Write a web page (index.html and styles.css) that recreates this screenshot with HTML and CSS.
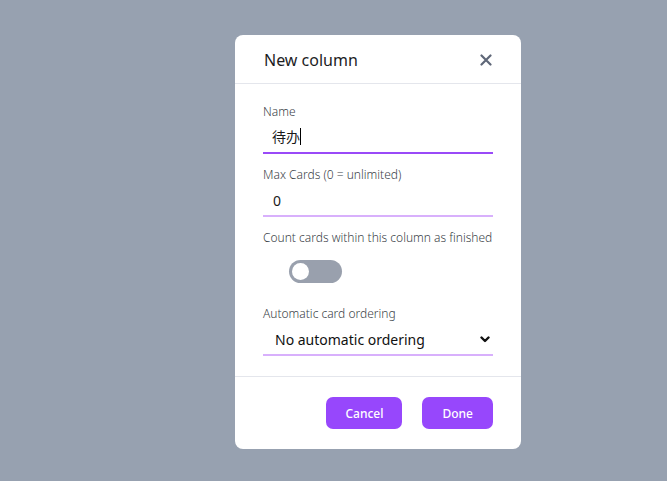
FILE: index.html
```html
<!DOCTYPE html>
<html>
<head>
<meta charset="utf-8">
<link rel="stylesheet" href="styles.css">
</head>
<body>
<div class="overlay">
  <div class="dialog">
    <div class="header">
      <span class="title">New column</span>
      <svg class="close" width="12" height="12" viewBox="0 0 12 12"><path d="M1.5 1.5 L10.5 10.5 M10.5 1.5 L1.5 10.5" stroke="#5f6778" stroke-width="2.2" stroke-linecap="round"/></svg>
    </div>
    <div class="body">
      <div class="field">
        <label class="label">Name</label>
        <div class="input active">待办<span class="caret"></span></div>
      </div>
      <div class="field">
        <label class="label">Max Cards (0 = unlimited)</label>
        <div class="input">0</div>
      </div>
      <div class="field">
        <label class="label">Count cards within this column as finished</label>
        <div class="toggle-row"><div class="toggle"><div class="knob"></div></div></div>
      </div>
      <div class="field last">
        <label class="label">Automatic card ordering</label>
        <div class="input select">
          <span>No automatic ordering</span>
          <svg width="10" height="7" viewBox="0 0 10 7"><path d="M1.5 1.5 L5 5 L8.5 1.5" fill="none" stroke="#111" stroke-width="2.4" stroke-linecap="round" stroke-linejoin="round"/></svg>
        </div>
      </div>
    </div>
    <div class="footer">
      <button class="btn">Cancel</button>
      <button class="btn done">Done</button>
    </div>
  </div>
</div>
</body>
</html>
```
FILE: styles.css
```css
html, body {
  margin: 0;
  padding: 0;
  height: 100%;
}
body {
  background: #97a1b0;
  font-family: "Noto Sans", "Noto Sans CJK SC", sans-serif;
}
.overlay {
  padding-top: 35px;
  padding-left: 235px;
}
.dialog {
  width: 286px;
  height: 414px;
  background: #fff;
  border-radius: 8px;
  display: flex;
  flex-direction: column;
  box-sizing: border-box;
}
.header {
  height: 48px;
  border-bottom: 1px solid #e4e6ec;
  display: flex;
  align-items: center;
  justify-content: space-between;
  padding: 0 28px 0 29px;
}
.title {
  font-size: 16px;
  color: #1d1d1f;
  position: relative;
  top: 1px;
}
.close {
  margin-right: 1px;
  margin-top: 1px;
}
.body {
  padding: 19px 28px 0 28px;
  border-bottom: 1px solid #e4e6ec;
  height: 293px;
  box-sizing: border-box;
}
.field {
  margin-bottom: 12px;
}
.label {
  display: block;
  font-size: 12px;
  font-weight: 300;
  white-space: nowrap;
  color: #3b3f48;
  line-height: 17px;
}
.input {
  height: 34px;
  border-bottom: 2px solid #d8b0fc;
  font-size: 14px;
  color: #1a1a1a;
  padding-left: 10px;
  padding-top: 2px;
  display: flex;
  align-items: center;
  box-sizing: border-box;
}
.input.active {
  border-bottom-color: #9a4af8;
  padding-left: 9px;
  padding-top: 0;
}
.caret {
  display: inline-block;
  width: 1px;
  height: 17px;
  background: #000;
}
.toggle-row {
  padding: 14px 0 0 26px;
  height: 37px;
  box-sizing: border-box;
}
.toggle {
  width: 53px;
  height: 23px;
  border-radius: 12px;
  background: #99a0ad;
  display: flex;
  align-items: center;
  padding-left: 3px;
  box-sizing: border-box;
}
.knob {
  width: 17px;
  height: 17px;
  border-radius: 50%;
  background: #fff;
}
.field.last {
  margin-top: 22px;
  margin-bottom: 0;
}
.select {
  justify-content: space-between;
  font-size: 14px;
  padding-left: 12px;
  padding-right: 3px;
  padding-top: 3px;
  color: #111;
}
.footer {
  flex: 1;
  display: flex;
  justify-content: flex-end;
  align-items: flex-start;
  gap: 20px;
  padding: 20px 28px 0 0;
}
.btn {
  height: 32px;
  border: none;
  border-radius: 7px;
  background: #9747fc;
  color: #fff;
  font-family: "Noto Sans", sans-serif;
  font-weight: 500;
  font-size: 12px;
  padding: 0 19px;
}
.btn.done {
  padding: 0 20px;
}
```
